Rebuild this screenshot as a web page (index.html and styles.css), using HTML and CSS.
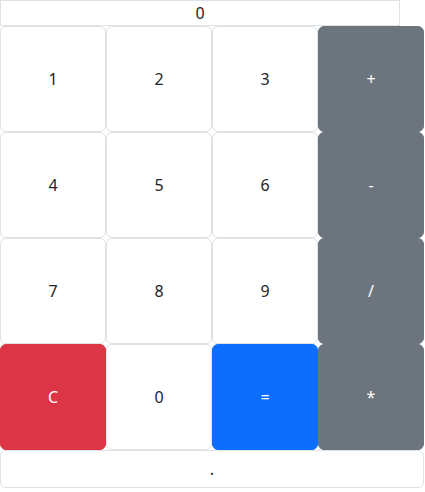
FILE: index.html
```html
<!DOCTYPE html>
<html>
<head>
<meta charset="utf-8">
<link rel="stylesheet" href="styles.css">
</head>
<body>
<div class="calc">
  <input class="display" type="text" value="0" readonly>
  <div class="keys">
    <button class="key">1</button>
    <button class="key">2</button>
    <button class="key">3</button>
    <button class="key op">+</button>
    <button class="key">4</button>
    <button class="key">5</button>
    <button class="key">6</button>
    <button class="key op">-</button>
    <button class="key">7</button>
    <button class="key">8</button>
    <button class="key">9</button>
    <button class="key op">/</button>
    <button class="key clear">C</button>
    <button class="key">0</button>
    <button class="key equals">=</button>
    <button class="key op">*</button>
  </div>
  <button class="key dot">.</button>
</div>
</body>
</html>
```
FILE: styles.css
```css
html, body {
  margin: 0;
  padding: 0;
  background: #fff;
}
.calc {
  width: 424px;
  font-family: "Noto Sans", "Open Sans", sans-serif;
}
.display {
  display: block;
  box-sizing: border-box;
  width: 400px;
  height: 26px;
  margin: 0;
  border: 1px solid #dee2e6;
  text-align: center;
  font-family: inherit;
  font-size: 16px;
  color: #212529;
  padding: 0;
  outline: none;
}
.keys {
  display: grid;
  grid-template-columns: repeat(4, 1fr);
}
.key {
  box-sizing: border-box;
  height: 106px;
  margin: 0;
  background: #fff;
  border: 1px solid #dee2e6;
  border-radius: 6px;
  font-family: inherit;
  font-size: 16px;
  color: #212529;
  padding: 6px 12px;
}
.op {
  background: #6c757d;
  border-color: #6c757d;
  color: #fff;
}
.clear {
  background: #dc3545;
  border-color: #dc3545;
  color: #fff;
}
.equals {
  background: #0d6efd;
  border-color: #0d6efd;
  color: #fff;
}
.dot {
  display: block;
  width: 424px;
  height: 38px;
}
```
